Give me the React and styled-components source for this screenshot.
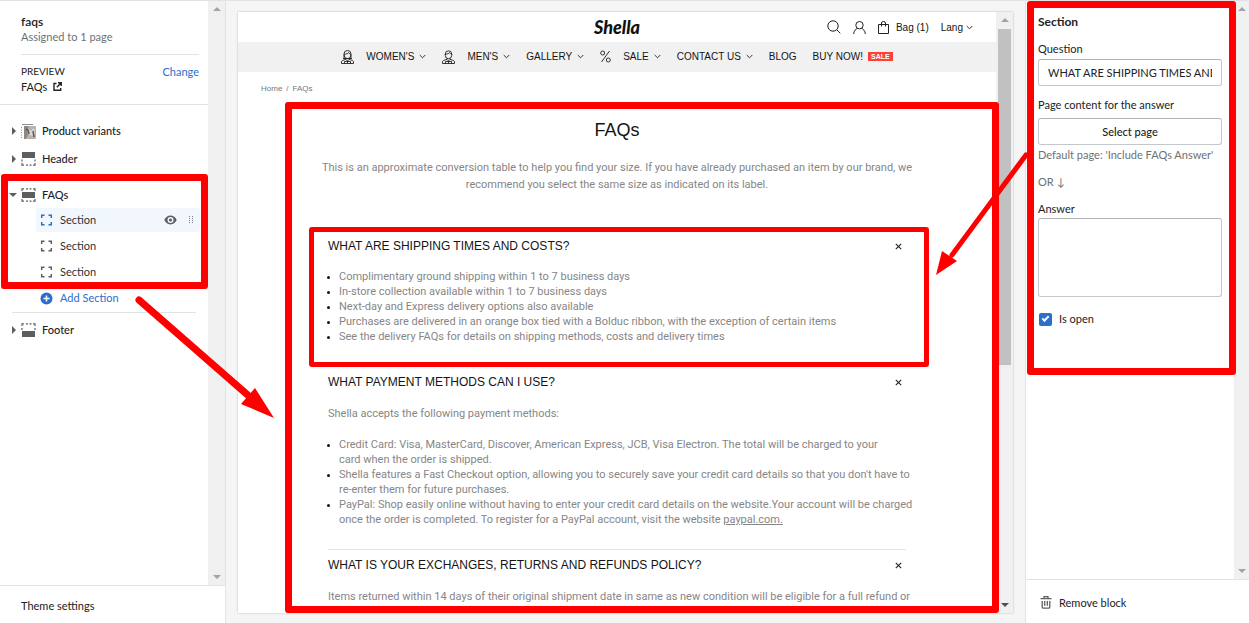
import React from "react";
import styled, { createGlobalStyle, css } from "styled-components";

const RED = "#ff0000";
const uiFont = `Lato, "Open Sans", sans-serif`;
const shopFont = `"Liberation Sans", Arial, sans-serif`;
const proseFont = `Roboto, "Liberation Sans", sans-serif`;

const GlobalStyle = createGlobalStyle`
  *, *::before, *::after { box-sizing: border-box; }
  body { margin: 0; background: #f5f5f5; font-family: ${uiFont}; font-size: 11px; line-height: 16px; color: #202223; }
  h1, h2, h3, p, ul { margin: 0; padding: 0; font-weight: 400; }
  button, input, textarea { font: inherit; color: inherit; }
  button { background: none; border: 0; padding: 0; text-align: left; cursor: pointer; }
  a { color: inherit; text-decoration: none; }
`;

const Editor = styled.div`
  display: grid;
  grid-template-columns: 226px minmax(0, 1fr) 224px;
  height: 100vh;
  border-top: 1px solid #e1e3e5;
  overflow: hidden;
`;

const Panel = styled.aside`
  display: flex;
  flex-direction: column;
  min-height: 0;
  background: #fff;
  position: relative;
  ${(p) => (p.$side === "left" ? "border-right" : "border-left")}: 1px solid #e1e3e5;
  z-index: 2;
`;

const PanelScroll = styled.div`
  flex: 1;
  display: flex;
  min-height: 0;
`;

const PanelBody = styled.div`
  flex: 1;
  min-width: 0;
`;

const PanelFooter = styled.footer`
  display: flex;
  align-items: center;
  height: ${(p) => p.$height}px;
  padding: 2px ${(p) => p.$pad}px 0;
  border-top: 1px solid #e1e3e5;
`;

const FooterButton = styled.button`
  display: flex;
  align-items: center;
  gap: 7px;
`;

const Track = styled.div`
  width: ${(p) => p.$width || 17}px;
  flex: none;
  display: flex;
  flex-direction: column;
  align-items: center;
  justify-content: space-between;
  padding: 6px 0;
  background: #f0f0f0;
`;

const Thumb = styled.div`
  width: 13px;
  height: 336px;
  margin: 7px 0 auto;
  background: #c1c1c1;
`;

const Arrowhead = styled.span`
  border: 4px solid transparent;
  ${(p) =>
    p.$up
      ? css`border-top: 0; border-bottom-color: ${p.$color || "#a3a3a3"};`
      : css`border-bottom: 0; border-top-color: ${p.$color || "#a3a3a3"};`}
`;

function Scrollbar({ width, thumb, downColor }) {
  return (
    <Track $width={width} aria-hidden="true">
      <Arrowhead $up />
      {thumb && <Thumb />}
      <Arrowhead $color={downColor} />
    </Track>
  );
}

/* Red callout frame drawn round its parent */
const Callout = styled.div`
  position: absolute;
  top: ${(p) => p.$top}px;
  right: ${(p) => p.$right}px;
  bottom: ${(p) => p.$bottom}px;
  left: ${(p) => p.$left}px;
  border: ${(p) => p.$weight || 7}px solid ${RED};
  border-radius: 3px;
  pointer-events: none;
  z-index: 3;
`;

const CalloutArrow = styled.svg`
  position: absolute;
  top: ${(p) => p.$top}px;
  left: ${(p) => p.$left}px;
  pointer-events: none;
  z-index: 4;
`;

/* ---------- left panel ---------- */

const TemplateHead = styled.header`
  padding: 13px 9px 10px 21px;
  border-bottom: 1px solid #e1e3e5;
`;

const TemplateName = styled.h1`
  font-size: 12px;
  line-height: 15px;
  font-weight: 600;
`;

const Muted = styled.p`
  color: #6d7175;
  line-height: 16px;
`;

const PreviewRow = styled.div`
  display: flex;
  justify-content: space-between;
  margin-top: 9px;
  padding-top: 9px;
  border-top: 1px solid #e1e3e5;
  line-height: 15px;
`;

const PreviewLabel = styled.div`
  font-size: 10px;
`;

const PreviewLink = styled.a`
  display: flex;
  align-items: center;
  gap: 6px;
`;

const LinkButton = styled.button`
  align-self: flex-start;
  color: #2c6ecb;
  line-height: 15px;
`;

const Tree = styled.nav`
  padding: 12px 0 0;
`;

const TreeItem = styled.button`
  display: flex;
  align-items: center;
  width: 100%;
  height: ${(p) => p.$height || 28}px;
  padding-left: 11px;
  font-weight: 500;
`;

const Caret = styled.span`
  width: 10px;
  display: flex;

  &::before {
    content: "";
    border: 4px solid transparent;
    ${(p) =>
      p.$open
        ? css`border-width: 4px 4px 0; border-top-color: #5c5f62; margin-left: -2px;`
        : css`border-width: 4px 0 4px 4px; border-left-color: #5c5f62; margin-left: 1px;`}
  }
`;

const TreeIcon = styled.span`
  display: flex;
  width: 21px;
`;

const Group = styled.div`
  position: relative;
  padding-top: 9px;
`;

const BlockRow = styled.div`
  display: flex;
  align-items: center;
  height: 24px;
  margin: 0 8px 2px 36px;
  padding: 0 6px 0 4px;
  border-radius: 3px;
  background: ${(p) => (p.$active ? "#f2f7fe" : "transparent")};
  color: ${(p) => (p.$accent ? "#2c6ecb" : "#303335")};
`;

const BlockName = styled.button`
  flex: 1;
  display: flex;
  align-items: center;
  gap: 7px;
`;

const IconButton = styled.button`
  display: flex;
  margin-left: ${(p) => p.$gap || 0}px;
`;

const Rule = styled.hr`
  margin: 2px 12px 3px;
  border: 0;
  border-top: 1px solid #e1e3e5;
`;

function TemplateIcon({ solid }) {
  const y = { top: 0, middle: 4, bottom: 8 }[solid];
  return (
    <svg width="15" height="14" viewBox="0 0 15 14" fill="none" stroke="#5c5f62" strokeWidth="1.200">
      <rect x="1" y={y} width="13" height="6" fill="#5c5f62" stroke="none" />
      {solid !== "top" && <path d="M1 3V.8h2M5 .8h2M8.500 .8h2M12 .8h2V3" />}
      {solid === "bottom" && <path d="M1 5v2M14 5v2" />}
      {solid !== "bottom" && <path d="M1 11v2.200h2M5 13.200h2M8.500 13.200h2M12 13.200h2V11" />}
      {solid === "top" && <path d="M1 7.500v2M14 7.500v2" />}
    </svg>
  );
}

function VariantIcon() {
  return (
    <svg width="15" height="15" viewBox="0 0 15 15">
      <path d="M1 .5h11" stroke="#8a8c8e" />
      <path d="M.5 3v11" stroke="#8a8c8e" strokeDasharray="1 1.500" />
      <rect x="3" y="2" width="12" height="13" rx="1" fill="#b9b2ae" />
      <path d="M3 2h5l-2 4 1 5-2 4H3z" fill="#8b8887" />
      <path d="M7 5l3 2 3-3 1 6-3 2-4-2z" fill="#ddd5cf" />
      <path d="M5 5l2 1 1 4M12 7l1 6" stroke="#5e5654" strokeWidth="1.500" fill="none" />
    </svg>
  );
}

function BlockIcon({ color }) {
  return (
    <svg width="13" height="12" viewBox="0 0 13 12" fill="none" stroke={color} strokeWidth="1.500">
      <path d="M1.700 4V1.200H4.500M8.500 1.200h2.800V4M11.300 8v2.800H8.500M4.500 10.800H1.700V8" />
    </svg>
  );
}

function PlusIcon() {
  return (
    <svg width="13" height="13" viewBox="0 0 13 13">
      <circle cx="6.500" cy="6.500" r="6" fill="#2c6ecb" />
      <path d="M6.500 3.500v6M3.500 6.500h6" stroke="#fff" strokeWidth="1.500" />
    </svg>
  );
}

function EyeIcon() {
  return (
    <svg width="13" height="10" viewBox="0 0 13 10">
      <path d="M.3 5C1.500 2.300 3.800.6 6.500.6S11.500 2.300 12.700 5C11.500 7.700 9.200 9.400 6.500 9.400S1.500 7.700.3 5z" fill="#5c5f62" />
      <circle cx="6.500" cy="5" r="3" fill="#f2f7fe" />
      <circle cx="6.500" cy="5" r="1.600" fill="#5c5f62" />
    </svg>
  );
}

function DragIcon() {
  return (
    <svg width="6" height="8" viewBox="0 0 6 8" fill="#7c8186">
      {[0, 2, 4, 6].map((y) => (
        <path key={y} d={`M1 ${y}h1v1H1zM4 ${y}h1v1H4z`} />
      ))}
    </svg>
  );
}

function ExternalIcon() {
  return (
    <svg width="9" height="9" viewBox="0 0 9 9" fill="none" stroke="#202223" strokeWidth="1.400">
      <path d="M3.500 1.500H1v6.700h6.700V6M5 .8h3.200V4M8 1L3.800 5.200" />
    </svg>
  );
}

function TrashIcon() {
  return (
    <svg width="12" height="13" viewBox="0 0 12 13" fill="none" stroke="#5c5f62" strokeWidth="1.300">
      <path d="M.5 2.700h11M4 2.500V.7h4v1.800M2.200 5v6q0 1.200 1.200 1.200h5.200q1.200 0 1.200-1.200V5M4.700 5v4.700M7.300 5v4.700" />
    </svg>
  );
}

/* ---------- shop preview ---------- */

const Stage = styled.main`
  min-width: 0;
  min-height: 0;
  padding: 11px 12px 10px;
  display: flex;
`;

const Frame = styled.div`
  position: relative;
  flex: 1;
  min-width: 0;
  display: flex;
  background: #fff;
  box-shadow: 0 0 2px rgba(0, 0, 0, 0.25);
`;

const Shop = styled.div`
  flex: 1;
  min-width: 0;
  overflow: hidden;
  font-family: ${shopFont};
  font-size: 11px;
  line-height: 15px;
  color: #141414;
`;

const ShopHeader = styled.header`
  display: grid;
  grid-template-columns: 1fr auto 1fr;
  align-items: center;
  height: 30px;
  padding: 0 23px;
`;

const Logo = styled.a`
  grid-column: 2;
  font-family: Lato, sans-serif;
  font-size: 18px;
  line-height: 30px;
  font-weight: 900;
  font-style: italic;
  color: #111;
`;

const Tools = styled.div`
  display: flex;
  justify-content: flex-end;
  align-items: center;
  gap: 12px;
  font-size: 10px;
`;

const Tool = styled.button`
  display: flex;
  align-items: center;
  gap: ${(p) => p.$gap || 0}px;
`;

const ShopNav = styled.nav`
  display: flex;
  justify-content: center;
  align-items: center;
  gap: 16px;
  height: 30px;
  padding-bottom: 1px;
  background: #f1f1f1;
  font-size: 10px;
`;

const NavItem = styled.a`
  display: flex;
  align-items: center;
  gap: 5px;
  white-space: nowrap;
`;

const NavIcon = styled.span`
  display: flex;
  margin-right: 7px;
`;

const SaleBadge = styled.span`
  padding: 0 3px;
  background: #f9423a;
  color: #fff;
  font-size: 7px;
  font-weight: 700;
  line-height: 9px;
`;

const Breadcrumb = styled.div`
  display: flex;
  gap: 4px;
  padding: 9px 23px;
  font-size: 8px;
  color: #777;
`;

const Content = styled.section`
  padding: 13px 86px 0;
`;

const Title = styled.h2`
  font-size: 18px;
  line-height: 24px;
  text-align: center;
`;

const Intro = styled.p`
  margin: 0 -12px;
  padding: 17px 0 37px;
  line-height: 17px;
  font-family: ${proseFont};
  text-align: center;
  color: #868686;
`;

const FaqItem = styled.article`
  position: relative;
  margin: 0 4px;
  border-top: 1px solid #e4e4e4;
`;

const Question = styled.button`
  display: flex;
  justify-content: space-between;
  align-items: center;
  width: 100%;
  padding: 8px 4px 8px 0;
  font-size: 12px;
  line-height: 15px;
`;

const Answer = styled.div`
  margin-right: -12px;
  padding: 7px 0 22px;
  font-family: ${proseFont};
  color: #868686;

  p { padding-top: 1px; }
  p + ul { margin-top: 16px; }
  a { text-decoration: underline; }
`;

const Bullets = styled.ul`
  padding-left: 11px;
  list-style: disc;

  li::marker { color: #141414; font-size: 9px; }
`;

function Chevron() {
  return (
    <svg width="7" height="5" viewBox="0 0 7 5" fill="none" stroke="#333">
      <path d="M.7 1l2.800 2.800L6.300 1" />
    </svg>
  );
}

function Cross() {
  return (
    <svg width="7" height="7" viewBox="0 0 7 7" fill="none" stroke="#222" strokeWidth="1.100">
      <path d="M.8.8l5.400 5.400M6.200.8L.8 6.200" />
    </svg>
  );
}

function PersonIcon({ long }) {
  return (
    <svg width="13" height="14" viewBox="0 0 13 14" fill="none" stroke="#222" strokeWidth=".9">
      <path d={long ? "M3 8.500V4a3.500 3.500 0 0 1 7 0v4.500M2 8.500h9" : "M3.300 5V4a3.200 3.200 0 0 1 6.400 0v1"} />
      <path d="M3.300 4.200C5.500 4.200 7 3.500 7.500 2.500c.5 1 1.200 1.500 2.200 1.700v1.300a3.200 3.200 0 0 1-6.400 0z" />
      <path d="M5 8.300v1L1.500 10.500Q.5 11 .5 12v1.500h12V12q0-1-1-1.500L8 9.300v-1M3.500 11.500v2M9.500 11.500v2M5 9.500l1.500 1.500L8 9.500M6.500 11v2.500M3.500 11.500h6" />
    </svg>
  );
}

function PercentIcon() {
  return (
    <svg width="11" height="13" viewBox="0 0 11 13" fill="none" stroke="#333">
      <circle cx="2.700" cy="3" r="2" />
      <circle cx="8.300" cy="10" r="2" />
      <path d="M9.500 1L1.500 12" />
    </svg>
  );
}

function SearchIcon() {
  return (
    <svg width="14" height="14" viewBox="0 0 14 14" fill="none" stroke="#222">
      <circle cx="6" cy="6" r="5.200" />
      <path d="M9.800 9.800l3.500 3.500" />
    </svg>
  );
}

function UserIcon() {
  return (
    <svg width="13" height="13" viewBox="0 0 13 13" fill="none" stroke="#222">
      <circle cx="6.500" cy="4.200" r="3.700" />
      <path d="M.6 13C1 9.500 3 7.800 4.500 7.400M12.400 13C12 9.500 10 7.800 8.500 7.400" />
    </svg>
  );
}

function BagIcon() {
  return (
    <svg width="11" height="13" viewBox="0 0 11 13" fill="none" stroke="#222">
      <path d="M.5 3.500h10v9H.5zM3.500 5.500V2a2 1.500 0 0 1 4 0v3.500" />
    </svg>
  );
}

const MENU = [
  { label: "WOMEN'S", icon: <PersonIcon long />, menu: true },
  { label: "MEN'S", icon: <PersonIcon />, menu: true },
  { label: "GALLERY", menu: true },
  { label: "SALE", icon: <PercentIcon />, menu: true },
  { label: "CONTACT US", menu: true },
  { label: "BLOG" },
  { label: "BUY NOW!", badge: "SALE" },
];

/* ---------- right panel ---------- */

const Settings = styled.form`
  position: relative;
  display: flex;
  flex-direction: column;
  height: 374px;
  padding: 13px 12px 0;
`;

const SettingsTitle = styled.h2`
  font-size: 12px;
  line-height: 16px;
  font-weight: 700;
  margin-bottom: 11px;
`;

const FieldLabel = styled.label`
  line-height: 16px;
  margin-bottom: ${(p) => p.$gap || 2}px;
`;

const controlStyle = css`
  width: 100%;
  border: 1px solid #c4c8cc;
  border-top-color: #aeb4b9;
  border-radius: 3px;
  background: #fff;
`;

const TextInput = styled.input`
  ${controlStyle}
  height: 27px;
  padding: 0 9px;
  margin-bottom: 11px;
`;

const PageButton = styled.button`
  ${controlStyle}
  height: 27px;
  text-align: center;
  font-weight: 500;
  margin-bottom: 2px;
`;

const TextArea = styled.textarea`
  ${controlStyle}
  display: block;
  height: 79px;
  resize: none;
  margin-bottom: 14px;
`;

const Hint = styled(Muted)`
  margin-bottom: 11px;
`;

const CheckLabel = styled.label`
  display: flex;
  align-items: center;
  gap: 7px;
  padding-left: 1px;
`;

const CheckBox = styled.input`
  appearance: none;
  width: 13px;
  height: 13px;
  margin: 0;
  display: grid;
  place-items: center;
  border-radius: 2px;
  background: #2c6ecb;

  &:checked::before {
    content: "";
    width: 7px;
    height: 4px;
    border: solid #fff;
    border-width: 0 0 2px 2px;
    transform: translateY(-1px) rotate(-45deg);
  }
`;

function LeftPanel() {
  return (
    <Panel $side="left">
      <PanelScroll>
        <PanelBody>
          <TemplateHead>
            <TemplateName>faqs</TemplateName>
            <Muted>Assigned to 1 page</Muted>
            <PreviewRow>
              <div>
                <PreviewLabel>PREVIEW</PreviewLabel>
                <PreviewLink href="#faqs">
                  FAQs <ExternalIcon />
                </PreviewLink>
              </div>
              <LinkButton type="button">Change</LinkButton>
            </PreviewRow>
          </TemplateHead>
          <Tree>
            <TreeItem type="button">
              <Caret />
              <TreeIcon><VariantIcon /></TreeIcon>
              Product variants
            </TreeItem>
            <TreeItem type="button">
              <Caret />
              <TreeIcon><TemplateIcon solid="top" /></TreeIcon>
              Header
            </TreeItem>
            <Group>
              <TreeItem type="button" aria-expanded="true" $height={26}>
                <Caret $open />
                <TreeIcon><TemplateIcon solid="middle" /></TreeIcon>
                FAQs
              </TreeItem>
              <BlockRow $active>
                <BlockName type="button"><BlockIcon color="#2c6ecb" />Section</BlockName>
                <IconButton type="button" aria-label="Hide block"><EyeIcon /></IconButton>
                <IconButton type="button" aria-label="Move block" $gap={11}><DragIcon /></IconButton>
              </BlockRow>
              <BlockRow>
                <BlockName type="button"><BlockIcon color="#5c5f62" />Section</BlockName>
              </BlockRow>
              <BlockRow>
                <BlockName type="button"><BlockIcon color="#5c5f62" />Section</BlockName>
              </BlockRow>
              <BlockRow $accent>
                <BlockName type="button"><PlusIcon />Add Section</BlockName>
              </BlockRow>
              <Callout $top={1} $right={0} $bottom={21} $left={1} />
              <CalloutArrow $top={122} $left={134} width="142" height="124" viewBox="0 0 142 124">
                <path d="M5 5L116 102" stroke={RED} strokeWidth="7" strokeLinecap="round" />
                <path d="M140 123L107 109L121 93z" fill={RED} />
              </CalloutArrow>
            </Group>
            <Rule />
            <TreeItem type="button">
              <Caret />
              <TreeIcon><TemplateIcon solid="bottom" /></TreeIcon>
              Footer
            </TreeItem>
          </Tree>
        </PanelBody>
        <Scrollbar />
      </PanelScroll>
      <PanelFooter $height={38} $pad={21}>
        <FooterButton type="button">Theme settings</FooterButton>
      </PanelFooter>
    </Panel>
  );
}

function FaqEntry({ title, children, marked }) {
  return (
    <FaqItem>
      <Question type="button" aria-expanded="true">
        {title}
        <Cross />
      </Question>
      <Answer>{children}</Answer>
      {marked && <Callout $top={-4} $right={-23} $bottom={-1} $left={-19} $weight={5} />}
    </FaqItem>
  );
}

function Preview() {
  return (
    <Stage>
      <Frame>
        <Shop>
          <ShopHeader>
            <Logo href="#home">Shella</Logo>
            <Tools>
              <Tool type="button" aria-label="Search"><SearchIcon /></Tool>
              <Tool type="button" aria-label="Account"><UserIcon /></Tool>
              <Tool type="button" $gap={7}><BagIcon />Bag (1)</Tool>
              <Tool type="button" $gap={3}>Lang <Chevron /></Tool>
            </Tools>
          </ShopHeader>
          <ShopNav>
            {MENU.map(({ label, icon, menu, badge }) => (
              <NavItem key={label} href="#menu">
                {icon && <NavIcon>{icon}</NavIcon>}
                {label}
                {menu && <Chevron />}
                {badge && <SaleBadge>{badge}</SaleBadge>}
              </NavItem>
            ))}
          </ShopNav>
          <Breadcrumb>
            <a href="#home">Home</a>
            <span>/</span>
            <span>FAQs</span>
          </Breadcrumb>
          <Content>
            <Title>FAQs</Title>
            <Intro>
              This is an approximate conversion table to help you find your size. If you have already purchased an
              item by our brand, we recommend you select the same size as indicated on its label.
            </Intro>
            <FaqEntry title="WHAT ARE SHIPPING TIMES AND COSTS?" marked>
              <Bullets>
                <li>Complimentary ground shipping within 1 to 7 business days</li>
                <li>In-store collection available within 1 to 7 business days</li>
                <li>Next-day and Express delivery options also available</li>
                <li>Purchases are delivered in an orange box tied with a Bolduc ribbon, with the exception of certain items</li>
                <li>See the delivery FAQs for details on shipping methods, costs and delivery times</li>
              </Bullets>
            </FaqEntry>
            <FaqEntry title="WHAT PAYMENT METHODS CAN I USE?">
              <p>Shella accepts the following payment methods:</p>
              <Bullets>
                <li>
                  Credit Card: Visa, MasterCard, Discover, American Express, JCB, Visa Electron. The total will be
                  charged to your
                  <br />
                  card when the order is shipped.
                </li>
                <li>
                  Shella features a Fast Checkout option, allowing you to securely save your credit card details so
                  that you don't have to re-enter them for future purchases.
                </li>
                <li>
                  PayPal: Shop easily online without having to enter your credit card details on the website.Your
                  account will be charged once the order is completed. To register for a PayPal account, visit the
                  website <a href="#paypal">paypal.com.</a>
                </li>
              </Bullets>
            </FaqEntry>
            <FaqEntry title="WHAT IS YOUR EXCHANGES, RETURNS AND REFUNDS POLICY?">
              <p>Items returned within 14 days of their original shipment date in same as new condition will be eligible for a full refund or</p>
            </FaqEntry>
          </Content>
        </Shop>
        <Scrollbar thumb downColor="#505050" />
        <Callout $top={90} $right={14} $bottom={0} $left={47} />
      </Frame>
    </Stage>
  );
}

function RightPanel() {
  return (
    <Panel $side="right">
      <PanelScroll>
        <PanelBody>
          <Settings>
            <SettingsTitle>Section</SettingsTitle>
            <FieldLabel htmlFor="question">Question</FieldLabel>
            <TextInput id="question" defaultValue="WHAT ARE SHIPPING TIMES AND COSTS?" />
            <FieldLabel htmlFor="page" $gap={5}>Page content for the answer</FieldLabel>
            <PageButton id="page" type="button">Select page</PageButton>
            <Hint>Default page: 'Include FAQs Answer'</Hint>
            <Hint>OR ↓</Hint>
            <FieldLabel htmlFor="answer" $gap={1}>Answer</FieldLabel>
            <TextArea id="answer" />
            <CheckLabel>
              <CheckBox type="checkbox" defaultChecked />
              Is open
            </CheckLabel>
            <Callout $top={0} $right={-2} $bottom={0} $left={1} />
          </Settings>
        </PanelBody>
        <Scrollbar width={15} />
      </PanelScroll>
      <PanelFooter $height={44} $pad={14}>
        <FooterButton type="button"><TrashIcon />Remove block</FooterButton>
      </PanelFooter>
      <CalloutArrow $top={148} $left={-92} width="96" height="128" viewBox="0 0 96 128">
        <path d="M92 6L18 106" stroke={RED} strokeWidth="5" strokeLinecap="round" />
        <path d="M2 126L8 102L23 112z" fill={RED} />
      </CalloutArrow>
    </Panel>
  );
}

export default function App() {
  return (
    <>
      <GlobalStyle />
      <Editor>
        <LeftPanel />
        <Preview />
        <RightPanel />
      </Editor>
    </>
  );
}
